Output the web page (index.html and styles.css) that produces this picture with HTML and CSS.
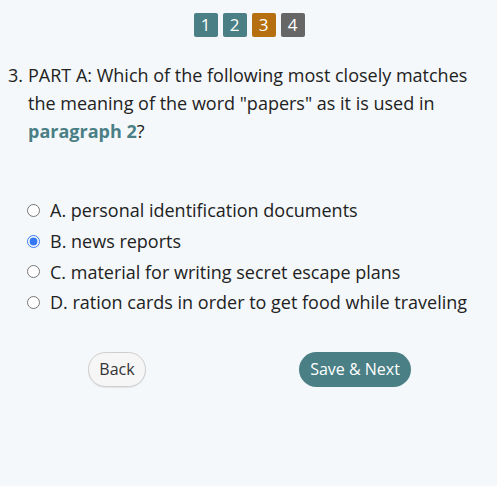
FILE: index.html
```html
<!DOCTYPE html>
<html>
<head>
<meta charset="utf-8">
<link rel="stylesheet" href="styles.css">
</head>
<body>
<div class="page">
  <div class="pager">
    <span class="pg done">1</span>
    <span class="pg done">2</span>
    <span class="pg current">3</span>
    <span class="pg todo">4</span>
  </div>
  <div class="question">
    <span class="num">3.</span>
    <span class="qtext">PART A: Which of the following most closely matches the meaning of the word "papers" as it is used in <b class="link">paragraph 2</b>?</span>
  </div>
  <div class="options">
    <label class="opt"><input type="radio" name="q"><span>A. personal identification documents</span></label>
    <label class="opt"><input type="radio" name="q" checked><span>B. news reports</span></label>
    <label class="opt"><input type="radio" name="q"><span>C. material for writing secret escape plans</span></label>
    <label class="opt"><input type="radio" name="q"><span>D. ration cards in order to get food while traveling</span></label>
  </div>
  <div class="actions">
    <button class="btn back">Back</button>
    <button class="btn next">Save &amp; Next</button>
  </div>
</div>
</body>
</html>
```
FILE: styles.css
```css
html, body {
  margin: 0;
  padding: 0;
  background: #f4f8fa;
}
body {
  font-family: "Open Sans", "Noto Sans", sans-serif;
  color: #222;
  width: 497px;
  height: 486px;
}
.page {
  padding: 13px 8px 0 8px;
}
.pager {
  display: flex;
  justify-content: center;
  gap: 5px;
  padding-left: 1px;
}
.pg {
  width: 24px;
  height: 24px;
  border-radius: 2px;
  color: #fff;
  font-size: 17px;
  line-height: 24px;
  text-align: center;
}
.pg.done { background: #4a7f86; }
.pg.current { background: #b66f0e; }
.pg.todo { background: #666666; }
.question {
  display: flex;
  margin-top: 24px;
  font-size: 18px;
  line-height: 28px;
}
.num {
  width: 20px;
  flex: none;
}
.qtext {
  width: 450px;
}
.link {
  color: #4a7f86;
  font-weight: 700;
}
.options {
  margin-top: 50px;
  padding-left: 18px;
  display: flex;
  flex-direction: column;
}
.opt {
  display: flex;
  align-items: center;
  height: 30.7px;
  font-size: 18px;
  color: #222;
}
.opt input {
  margin: 0 10px 0 1px;
  width: 13px;
  height: 13px;
  accent-color: #3478f6;
}
.actions {
  display: flex;
  margin-top: 34px;
  padding-left: 80px;
}
.btn {
  font-family: "Open Sans", "Noto Sans", sans-serif;
  font-size: 16px;
  height: 35px;
  border-radius: 18px;
  cursor: pointer;
}
.back {
  width: 58px;
  background: #f6f6f6;
  border: 1px solid #cfcfcf;
  color: #333;
  padding: 0;
  box-shadow: 0 1px 1px rgba(0,0,0,0.08);
}
.next {
  margin-left: 153px;
  width: 112px;
  background: #4a7f86;
  border: none;
  color: #fff;
  padding: 0;
}
```
